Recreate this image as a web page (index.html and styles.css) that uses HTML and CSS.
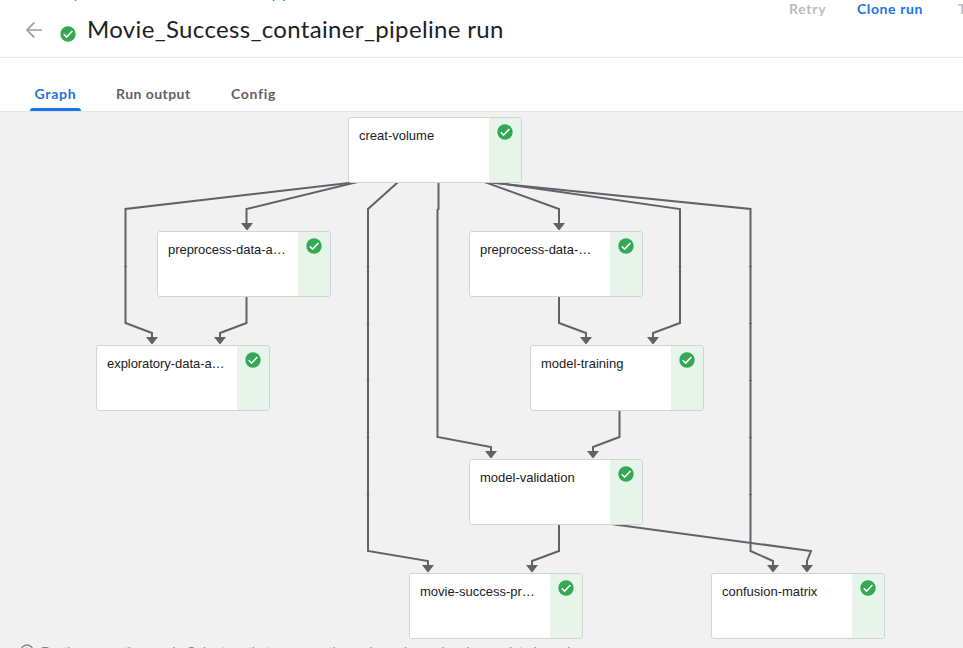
FILE: index.html
```
<!DOCTYPE html>
<html lang="en">
<head>
<meta charset="utf-8">
<title>Movie_Success_container_pipeline run</title>
<link rel="stylesheet" href="styles.css">
</head>
<body>
<svg width="0" height="0" class="defs" aria-hidden="true">
  <symbol id="check" viewBox="0 0 16 16"><circle cx="8" cy="8" r="7.7" fill="#34a853"/><path d="M3.7 8.3l2.9 2.8 5.8-6.1" fill="none" stroke="#fff" stroke-width="1.5"/></symbol>
</svg>
<header class="header">
  <div class="title-side">
    <div class="crumbs"><span class="crumb-root">Experiments</span><span class="crumb-name">Movie Success pipeline</span></div>
    <div class="title-row">
      <svg class="back" viewBox="0 0 16 16"><path d="M16 8H1M8.3.7L1 8l7.3 7.3" fill="none" stroke="#9e9e9e" stroke-width="1.7"/></svg>
      <svg class="status"><use href="#check"/></svg>
      <h1 class="title">Movie_Success_container_pipeline run</h1>
    </div>
  </div>
  <div class="actions"><span class="action retry">Retry</span><span class="action clone">Clone run</span><span class="action terminate">Terminate</span></div>
</header>
<nav class="tabs">
  <div class="tab graph-tab active">Graph</div><div class="tab output-tab">Run output</div><div class="tab config-tab">Config</div>
</nav>
<main class="canvas">
  <svg class="edges" viewBox="0 112 963 536">
    <g fill="none" stroke="#5f6368" stroke-width="2">
      <path d="M435 173L125.500 209V323L152 333V340"/>
      <path d="M435 163L246.500 209V225"/>
      <path d="M435 149L368 209V551L428 561V568"/>
      <path d="M438.500 182V209L437.500 210V437L491 447V454"/>
      <path d="M435 164L559 209V225"/>
      <path d="M435 174L680 209V323L653 333V340"/>
      <path d="M435 177L750.500 209V551L773 561V568"/>
      <path d="M246.500 296V323L220 333V340"/>
      <path d="M559 296V323L586 333V340"/>
      <path d="M619.500 410V437L593 447V454"/>
      <path d="M559 524V551L532 561V568"/>
      <path d="M600 522.500L811 551L807 561V568"/>
    </g>
    <path class="heads" fill="#5f6368" d="M146 337h12l-5.500 7h-1zM241 223h12l-5.500 7h-1zM422 565h12l-5.500 7h-1zM485 451h12l-5.500 7h-1zM553 223h12l-5.500 7h-1zM647 337h12l-5.500 7h-1zM767 565h12l-5.500 7h-1zM214 337h12l-5.500 7h-1zM580 337h12l-5.500 7h-1zM587 451h12l-5.500 7h-1zM526 565h12l-5.500 7h-1zM801 565h12l-5.500 7h-1z"/>
    <path d="M124.200 266.500h2.600M366.700 266.500h2.600M366.700 323.500h2.600M366.700 380.500h2.600M366.700 437.500h2.600M366.700 494.500h2.600M678.700 266.500h2.600M749.200 266.500h2.600M749.200 323.500h2.600M749.200 380.500h2.600M749.200 437.500h2.600M749.200 494.500h2.600" stroke="#5f6368"/>
  </svg>
  <div class="node creat-volume"><div class="label">creat-volume</div><div class="state"><svg><use href="#check"/></svg></div></div>
  <div class="node preprocess-a"><div class="label">preprocess-data-a…</div><div class="state"><svg><use href="#check"/></svg></div></div>
  <div class="node preprocess-b"><div class="label">preprocess-data-…</div><div class="state"><svg><use href="#check"/></svg></div></div>
  <div class="node exploratory"><div class="label">exploratory-data-a…</div><div class="state"><svg><use href="#check"/></svg></div></div>
  <div class="node training"><div class="label">model-training</div><div class="state"><svg><use href="#check"/></svg></div></div>
  <div class="node validation"><div class="label">model-validation</div><div class="state"><svg><use href="#check"/></svg></div></div>
  <div class="node prediction"><div class="label">movie-success-pr…</div><div class="state"><svg><use href="#check"/></svg></div></div>
  <div class="node confusion"><div class="label">confusion-matrix</div><div class="state"><svg><use href="#check"/></svg></div></div>
  <div class="hint"><svg viewBox="0 0 14 14"><circle cx="7" cy="7" r="6" fill="none" stroke="#80868b" stroke-width="1.300"/><path d="M7 6v5M7 3.500v1.300" stroke="#80868b" stroke-width="1.300"/></svg><span>Runtime execution graph. Only steps that are currently running or have already completed are shown.</span></div>
</main>
</body>
</html>
```

FILE: styles.css
```
* { box-sizing: border-box; }
html, body { height: 648px; overflow: hidden; }
body { margin: 0; display: flex; flex-direction: column; background: #fff; color: #202124; font-family: "Liberation Sans", Arial, sans-serif; }
.defs { position: absolute; }
.header { height: 58px; flex: none; display: flex; justify-content: space-between; border-bottom: 1px solid #e8eaeb; overflow: hidden; }
.title-side { display: flex; flex-direction: column; white-space: nowrap; }
.crumbs { height: 18px; margin-top: -15px; padding-left: 60px; margin-bottom: -3px; display: flex; gap: 54px; font: 13px/18px Lato, sans-serif; color: #5f6368; }
.crumb-name { color: #2a56c6; }
.title-row { display: flex; align-items: flex-start; padding-left: 26px; }
.back { width: 16px; height: 16px; margin-top: 22px; }
.status { width: 16px; height: 16px; margin: 26px 0 0 18px; }
.title { margin: 12px 0 0 11px; font: 400 24px/34px Lato, sans-serif; letter-spacing: .33px; }
.actions { display: flex; height: 18px; width: 174px; flex: none; gap: 31px; white-space: nowrap; font: 700 14px/18px Lato, sans-serif; letter-spacing: .3px; }
.action { flex: none; }
.retry { width: 37px; color: #bdbdbd; letter-spacing: .7px; }
.clone { width: 70px; color: #1a73e8; letter-spacing: .6px; }
.terminate { color: #bdbdbd; }
.tabs { height: 54px; flex: none; display: flex; padding-left: 30px; border-bottom: 1px solid #e4e4e4; font: 700 14px/18px Lato, sans-serif; letter-spacing: .45px; color: #5f6368; }
.tab { padding-top: 27px; white-space: nowrap; }
.graph-tab { width: 51px; margin-right: 35px; text-align: center; color: #1a73e8; display: flex; flex-direction: column; justify-content: space-between; letter-spacing: .8px; }
.graph-tab::after { content: ""; height: 3px; border-radius: 3px 3px 0 0; background: #1a73e8; }
.output-tab { width: 115px; }
.config-tab { letter-spacing: .7px; }
.canvas { position: relative; flex: 1; background: #f1f1f1; overflow: hidden; }
.edges { position: absolute; left: 0; top: 0; width: 963px; height: 536px; }
.node { position: absolute; width: 174px; height: 66px; display: flex; background: #fff; border: 1px solid #d3d5d5; border-radius: 3px; overflow: hidden; }
.label { flex: 1; padding: 10px 0 0 10px; font-size: 13px; line-height: 16px; white-space: nowrap; }
.preprocess-a .label, .exploratory .label { letter-spacing: -.05px; }
.state { width: 32px; background: #e6f4ea; display: flex; justify-content: center; padding-top: 6px; }
.state svg { width: 16px; height: 16px; }
.creat-volume { left: 348px; top: 5px; }
.preprocess-a { left: 157px; top: 119px; }
.preprocess-b { left: 469px; top: 119px; }
.exploratory { left: 96px; top: 233px; }
.training { left: 530px; top: 233px; }
.validation { left: 469px; top: 347px; }
.prediction { left: 409px; top: 461px; }
.confusion { left: 711px; top: 461px; }
.hint { position: absolute; left: 20px; top: 532px; display: flex; gap: 7px; font-size: 13px; line-height: 16px; letter-spacing: -.26px; color: #80868b; white-space: nowrap; }
.hint svg { width: 14px; height: 14px; }
```
